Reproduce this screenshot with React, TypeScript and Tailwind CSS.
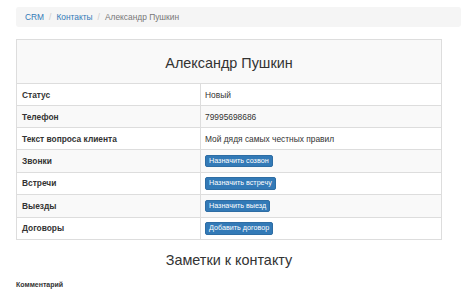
import React from 'react'

const rows: { label: string; value?: string; action?: string }[] = [
  { label: 'Статус', value: 'Новый' },
  { label: 'Телефон', value: '79995698686' },
  { label: 'Текст вопроса клиента', value: 'Мой дядя самых честных правил' },
  { label: 'Звонки', action: 'Назначить созвон' },
  { label: 'Встречи', action: 'Назначить встречу' },
  { label: 'Выезды', action: 'Назначить выезд' },
  { label: 'Договоры', action: 'Добавить договор' },
]

export default function App() {
  return (
    <div className="min-h-[297px] bg-white pl-4 pt-[7px] text-[8.4px] leading-[12px] text-[#333] font-['Liberation_Sans',Arial,sans-serif]">
      <ol className="mb-[12px] flex items-center rounded-[2.4px] bg-[#f5f5f5] px-[9px] py-[4px]">
        <li><a className="text-[#337ab7]">CRM</a></li>
        <li className="px-[5px] text-[#ccc]">/</li>
        <li><a className="text-[#337ab7]">Контакты</a></li>
        <li className="px-[5px] text-[#ccc]">/</li>
        <li className="text-[#777]">Александр Пушкин</li>
      </ol>

      <table className="mr-[19px] w-[426px] border-collapse border border-[#ddd]">
        <thead>
          <tr className="bg-[#f9f9f9]">
            <th colSpan={2} className="h-[44px] border border-[#ddd] px-[5px] pb-[12px] pt-[14px]">
              <h3 className="text-[14.4px] font-normal leading-[16px] text-[#333]">Александр Пушкин</h3>
            </th>
          </tr>
        </thead>
        <tbody>
          {rows.map((r, i) => (
            <tr key={r.label} className={i % 2 === 1 ? 'bg-[#f9f9f9]' : 'bg-white'}>
              <td className="w-[184px] border border-[#ddd] px-[5px] py-[4.5px] font-bold">{r.label}</td>
              <td className="border border-[#ddd] px-[4px] py-[4.5px]">
                {r.value && r.value}
                {r.action && (
                  <button className="flex h-[12.5px] w-fit items-center rounded-[2px] border border-[#2e6da4] bg-[#337ab7] px-[3px] text-[7.2px] leading-[10px] text-white">
                    {r.action}
                  </button>
                )}
              </td>
            </tr>
          ))}
        </tbody>
      </table>

      <h3 className="mt-[12px] mr-[19px] text-center text-[14.4px] leading-[16px] text-[#333]">Заметки к контакту</h3>
      <label className="mt-[11px] block text-[7px] font-bold">Комментарий</label>
    </div>
  )
}
